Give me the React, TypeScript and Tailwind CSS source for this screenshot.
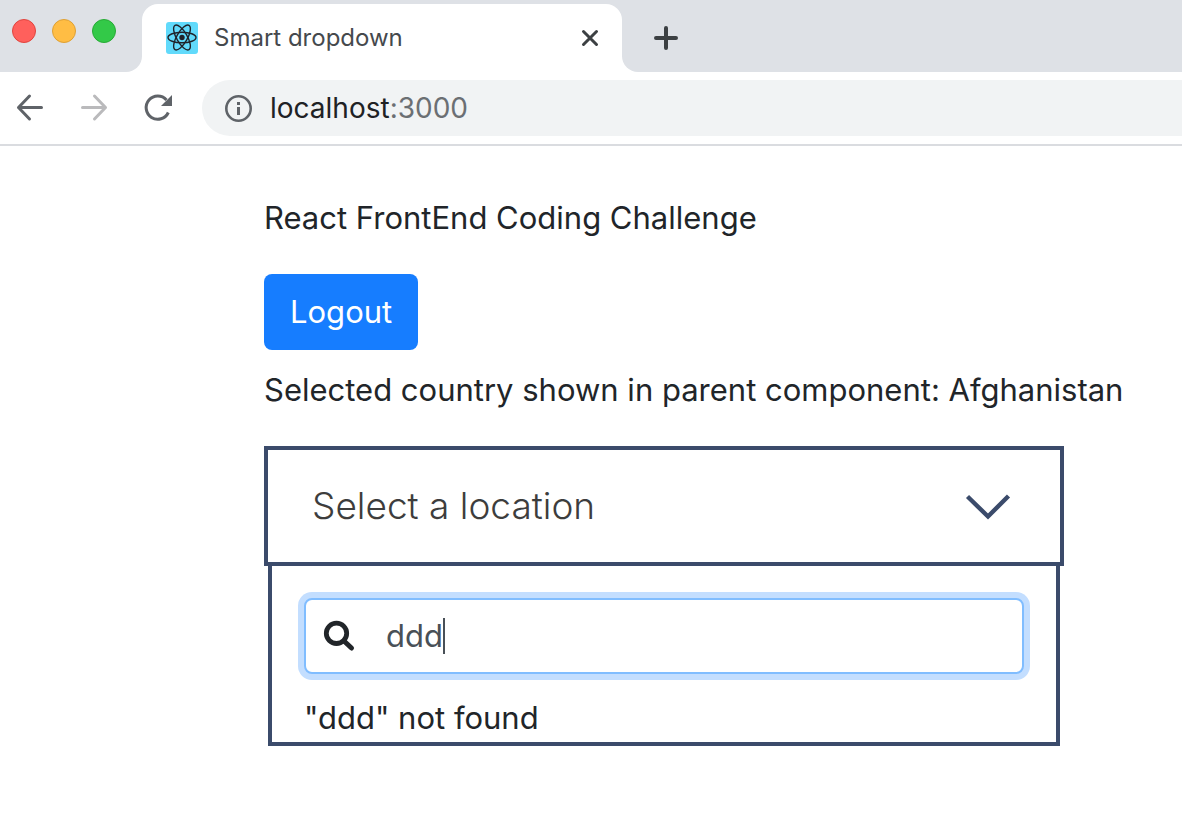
import { useState } from "react";

function TrafficLights() {
  return (
    <div className="flex w-[142px] shrink-0 gap-4 rounded-br-2xl bg-[#dee1e6] px-3 pt-[19px]">
      <span className="size-6 rounded-full border border-[#e0443e] bg-[#ff605c]" />
      <span className="size-6 rounded-full border border-[#dea034] bg-[#ffbd44]" />
      <span className="size-6 rounded-full border border-[#27aa35] bg-[#33c948]" />
    </div>
  );
}

function ReactLogo() {
  return (
    <svg viewBox="0 0 32 32" className="size-8 shrink-0" fill="none" aria-hidden="true">
      <rect width="32" height="32" rx="3" fill="#61dafb" />
      <g stroke="#20232a" strokeWidth="1.4">
        <ellipse cx="16" cy="15.5" rx="14" ry="5.3" />
        <ellipse cx="16" cy="15.5" rx="14" ry="5.3" transform="rotate(60 16 15.5)" />
        <ellipse cx="16" cy="15.5" rx="14" ry="5.3" transform="rotate(120 16 15.5)" />
      </g>
      <circle cx="16" cy="15.5" r="2.7" fill="#20232a" />
    </svg>
  );
}

function TabStrip() {
  return (
    <div className="flex h-[72px] bg-white">
      <TrafficLights />
      <div className="w-[480px] shrink-0 bg-[#dee1e6] pt-1">
        <div className="flex h-[68px] items-center rounded-t-2xl bg-white pr-5 pl-6">
          <ReactLogo />
          <span className="ml-4 flex-1 text-[24px] text-[#45494d]">Smart dropdown</span>
          <button type="button" aria-label="Close tab" className="size-6">
            <svg viewBox="0 0 24 24" className="size-6" stroke="#3c4043" strokeWidth="3" strokeLinecap="round">
              <path d="M5.5 5.5l13 13M18.5 5.5l-13 13" />
            </svg>
          </button>
        </div>
      </div>
      <div className="flex flex-1 items-center rounded-bl-2xl bg-[#dee1e6] pt-1 pl-7">
        <button type="button" aria-label="New tab" className="size-8">
          <svg viewBox="0 0 32 32" className="size-8" stroke="#3c4043" strokeWidth="4" strokeLinecap="round">
            <path d="M16 6v20M6 16h20" />
          </svg>
        </button>
      </div>
    </div>
  );
}

function Toolbar() {
  return (
    <div className="flex items-center border-b-2 border-[#dadce0] bg-white py-2 pl-[14px]">
      <button type="button" aria-label="Back" className="size-8">
        <svg viewBox="0 0 32 32" className="size-8" fill="none" stroke="#5f6368" strokeWidth="3" strokeLinecap="round" strokeLinejoin="round">
          <path d="M27.5 15.5H4.5M15.5 4L4.5 15.5L15.5 27" />
        </svg>
      </button>
      <button type="button" aria-label="Forward" className="ml-8 size-8">
        <svg viewBox="0 0 32 32" className="size-8" fill="none" stroke="#bababc" strokeWidth="3" strokeLinecap="round" strokeLinejoin="round">
          <path d="M4.5 15.5H27.5M16.5 4L27.5 15.5L16.5 27" />
        </svg>
      </button>
      <button type="button" aria-label="Reload" className="ml-8 size-8">
        <svg viewBox="0 0 32 32" className="size-8" fill="none">
          <path d="M26.3 20.5A11.6 11.6 0 1 1 24.5 8" stroke="#5f6368" strokeWidth="3" />
          <path d="M30 3v11H19z" fill="#5f6368" />
        </svg>
      </button>
      <div className="ml-7 flex h-14 flex-1 items-center gap-[18px] rounded-l-full bg-[#f1f3f4] pl-[22px]">
        <svg viewBox="0 0 28 28" className="size-7 shrink-0" fill="none" aria-hidden="true">
          <circle cx="14.5" cy="14.5" r="12.2" stroke="#5f6368" strokeWidth="2.6" />
          <path d="M13 8h3v3h-3zM13 13h3v8h-3z" fill="#5f6368" />
        </svg>
        <a href="http://localhost:3000" className="text-[28px] leading-10 text-[#202124]">
          localhost<span className="text-[#6b6f73]">:3000</span>
        </a>
      </div>
    </div>
  );
}

function CountryDropdown() {
  const [open, setOpen] = useState(true);
  const [query, setQuery] = useState("ddd");

  return (
    <div className="w-full max-w-[800px]">
      <button
        type="button"
        aria-expanded={open}
        onClick={() => setOpen(!open)}
        className="flex h-[120px] w-full items-center justify-between border-4 border-[#3b4b6b] pr-12 pl-11 text-[37px] font-light text-[#3d3d3d]"
      >
        Select a location
        <svg viewBox="0 0 48 32" className="h-8 w-12" fill="none" stroke="#3b4b6b" strokeWidth="4.4" aria-hidden="true">
          <path d="M3.5 6.5L24 26.5L44.5 6" />
        </svg>
      </button>
      {open && (
        <div className="mx-1 border-x-4 border-b-4 border-[#3b4b6b] px-8 pt-8">
          <label className="flex h-[76px] items-center rounded-lg border-2 border-[#80bdff] bg-white pl-4 ring-[6px] ring-[#c3deff]">
            <svg viewBox="0 0 36 36" className="size-9 shrink-0" fill="none" stroke="#212529" aria-hidden="true">
              <circle cx="14.5" cy="15.3" r="10.2" strokeWidth="4.8" />
              <path d="M22 23L29.5 30" strokeWidth="5" strokeLinecap="round" />
            </svg>
            <input
              type="text"
              aria-label="Search location"
              value={query}
              onChange={(e) => setQuery(e.target.value)}
              className="ml-7 field-sizing-content text-[31px] text-[#495057] caret-transparent outline-none"
            />
            <span className="h-9 w-0.5 bg-[#495057]" />
          </label>
          <p className="mt-5">"{query}" not found</p>
        </div>
      )}
    </div>
  );
}

export default function App() {
  return (
    <div className="min-h-screen overflow-x-hidden bg-white font-[Inter,sans-serif]">
      <header>
        <TabStrip />
        <Toolbar />
      </header>
      <main className="flex flex-col items-start pt-12 pr-8 pb-12 pl-[264px] text-[31px] leading-[48px] text-[#212529]">
        <p>React FrontEnd Coding Challenge</p>
        <button type="button" className="mt-8 h-[76px] rounded-lg bg-[#167dff] px-[26px] text-white">
          Logout
        </button>
        <p className="mt-4 mb-8 whitespace-nowrap">Selected country shown in parent component: Afghanistan</p>
        <CountryDropdown />
      </main>
    </div>
  );
}
